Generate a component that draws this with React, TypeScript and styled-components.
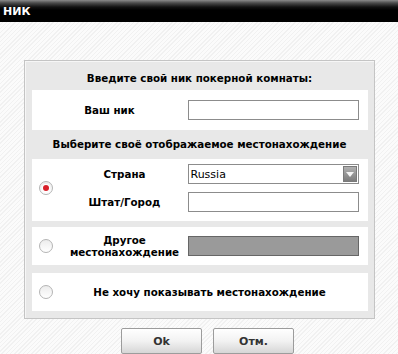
import React from "react";
import styled, { createGlobalStyle } from "styled-components";

const GlobalStyle = createGlobalStyle`
  html, body {
    margin: 0;
    padding: 0;
  }
  body {
    width: 398px;
    height: 354px;
    overflow: hidden;
    font-family: "DejaVu Sans", Verdana, sans-serif;
    font-size: 10.3px;
    color: #000;
  }
`;

const Window = styled.div`
  width: 398px;
  height: 354px;
  display: flex;
  flex-direction: column;
  background-color: #f8f8f8;
  background-image: repeating-linear-gradient(
    135deg,
    #fbfbfb 0px,
    #fbfbfb 2px,
    #f1f1f1 2px,
    #f1f1f1 3px
  );
`;

const TitleBar = styled.div`
  height: 22px;
  line-height: 23px;
  padding-left: 3px;
  color: #fff;
  font-weight: bold;
  font-size: 11px;
  background: linear-gradient(
    to bottom,
    #8a8a8a 0px,
    #4a4a4a 3px,
    #111 7px,
    #000 10px,
    #000 22px
  );
`;

const Body = styled.div`
  display: flex;
  flex-direction: column;
  align-items: center;
  padding-top: 38px;
`;

const Panel = styled.div`
  width: 336px;
  padding: 0 6px 7px 7px;
  background: #e8e8e8;
  border: 1px solid #c4c4c4;
  box-shadow: inset 1px 1px 0 #f6f6f6;
  display: flex;
  flex-direction: column;
`;

const Header = styled.div<{ $top: number; $bottom: number }>`
  padding: ${(p) => p.$top}px 0 ${(p) => p.$bottom}px;
  line-height: 12px;
  text-align: center;
  font-weight: bold;
`;

const Row = styled.div<{ $gapBefore?: number }>`
  background: #fff;
  margin-top: ${(p) => p.$gapBefore ?? 0}px;
`;

const NickGrid = styled.div`
  display: grid;
  grid-template-columns: 156px 171px;
  align-items: center;
  height: 40px;
`;

const RadioGrid = styled.div<{ $pad: string; $height?: number }>`
  display: grid;
  grid-template-columns: 30px 1fr;
  align-items: center;
  padding: ${(p) => p.$pad};
  height: ${(p) => (p.$height ? `${p.$height}px` : "auto")};
`;

const RadioCell = styled.div`
  display: flex;
  justify-content: center;
  padding-right: 2px;
`;

const RadioCircle = styled.div<{ $checked?: boolean }>`
  width: 14px;
  height: 14px;
  border-radius: 50%;
  box-sizing: border-box;
  border: 1px solid #b4b4b4;
  background: linear-gradient(to bottom, #ececec, #ffffff);
  display: flex;
  align-items: center;
  justify-content: center;
`;

const RadioDot = styled.div`
  width: 6px;
  height: 6px;
  border-radius: 50%;
  background: #d8202a;
  box-shadow: 0 0 0 1px #fff;
`;

const Fields = styled.div`
  display: grid;
  grid-template-columns: 126px 171px;
  row-gap: 8px;
  align-items: center;
`;

const Label = styled.div`
  font-weight: bold;
  text-align: center;
  line-height: 12px;
`;

const WideLabel = styled.div`
  font-weight: bold;
  text-align: center;
  padding-right: 10px;
`;

const Input = styled.div`
  height: 20px;
  box-sizing: border-box;
  border: 1px solid #8c8c8c;
  background: #fff;
`;

const DisabledInput = styled.div`
  height: 20px;
  box-sizing: border-box;
  border: 1px solid #666;
  background: #9a9a9a;
`;

const Select = styled.div`
  height: 20px;
  box-sizing: border-box;
  border: 1px solid #8c8c8c;
  background: #fff;
  display: flex;
  align-items: center;
  justify-content: space-between;
  padding: 0 1px 0 2px;
  font-size: 11px;
`;

const SelectArrow = styled.div`
  width: 14px;
  height: 16px;
  box-sizing: border-box;
  border: 1px solid #7a7a7a;
  background: linear-gradient(to bottom, #b0b0b0, #7c7c7c);
  display: flex;
  align-items: center;
  justify-content: center;
`;

const Buttons = styled.div`
  display: flex;
  gap: 11px;
  margin-top: 9px;
  margin-left: 17px;
`;

const Button = styled.div`
  width: 81px;
  height: 26px;
  box-sizing: border-box;
  border: 1px solid #9c9c9c;
  border-radius: 2px;
  background: linear-gradient(to bottom, #ffffff 0%, #f2f2f2 50%, #d6d6d6 100%);
  display: flex;
  align-items: center;
  justify-content: center;
  font-weight: bold;
  font-size: 11px;
  color: #333;
`;

const Radio: React.FC<{ checked?: boolean }> = ({ checked }) => (
  <RadioCircle $checked={checked}>{checked && <RadioDot />}</RadioCircle>
);

export default function App() {
  return (
    <>
      <GlobalStyle />
      <Window>
        <TitleBar>НИК</TitleBar>
        <Body>
          <Panel>
            <Header $top={11} $bottom={6}>
              Введите свой ник покерной комнаты:
            </Header>
            <Row>
              <NickGrid>
                <Label>Ваш ник</Label>
                <Input />
              </NickGrid>
            </Row>
            <Header $top={8} $bottom={9}>
              Выберите своё отображаемое местонахождение
            </Header>
            <Row>
              <RadioGrid $pad="5px 0 9px">
                <RadioCell>
                  <Radio checked />
                </RadioCell>
                <Fields>
                  <Label>Страна</Label>
                  <Select>
                    <span>Russia</span>
                    <SelectArrow>
                      <svg width="8" height="5" viewBox="0 0 8 5">
                        <path d="M0 0 L8 0 L4 5 Z" fill="#f4f4f4" />
                      </svg>
                    </SelectArrow>
                  </Select>
                  <Label>Штат/Город</Label>
                  <Input />
                </Fields>
              </RadioGrid>
            </Row>
            <Row $gapBefore={6}>
              <RadioGrid $pad="7px 0">
                <RadioCell>
                  <Radio />
                </RadioCell>
                <Fields>
                  <Label>
                    Другое
                    <br />
                    местонахождение
                  </Label>
                  <DisabledInput />
                </Fields>
              </RadioGrid>
            </Row>
            <Row $gapBefore={8}>
              <RadioGrid $pad="0" $height={38}>
                <RadioCell>
                  <Radio />
                </RadioCell>
                <WideLabel>Не хочу показывать местонахождение</WideLabel>
              </RadioGrid>
            </Row>
          </Panel>
          <Buttons>
            <Button>Ok</Button>
            <Button>Отм.</Button>
          </Buttons>
        </Body>
      </Window>
    </>
  );
}
